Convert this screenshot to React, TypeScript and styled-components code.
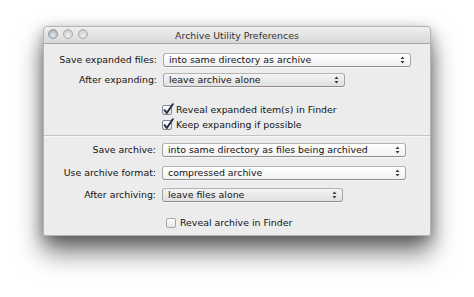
import React from "react";
import styled, { createGlobalStyle } from "styled-components";

const Global = createGlobalStyle`
  html, body { margin: 0; padding: 0; background: #ffffff; }
  body { font-family: "DejaVu Sans", "Liberation Sans", sans-serif; }
`;

const Stage = styled.div`
  width: 474px;
  height: 297px;
  padding: 26px 0 0 43px;
  box-sizing: border-box;
  overflow: hidden;
`;

const Window = styled.div`
  width: 388px;
  height: 210px;
  box-sizing: border-box;
  display: flex;
  flex-direction: column;
  background: #ececec;
  border: 1px solid #b3b3b3;
  border-radius: 4px 4px 2px 2px;
  box-shadow: 0 16px 26px rgba(0, 0, 0, 0.55), 0 4px 14px rgba(0, 0, 0, 0.3);
  color: #141414;
  font-size: 9.4px;
`;

const TitleBar = styled.div`
  position: relative;
  height: 16px;
  flex: none;
  display: flex;
  align-items: center;
  justify-content: center;
  background: linear-gradient(#f0f0f0, #d8d8d8);
  border-bottom: 1px solid #a8a8a8;
  border-radius: 4px 4px 0 0;
`;

const Lights = styled.div`
  position: absolute;
  left: 4px;
  top: 2px;
  display: flex;
  gap: 5px;
`;

const Light = styled.span<{ $first?: boolean }>`
  width: 10px;
  height: 10px;
  box-sizing: border-box;
  border-radius: 50%;
  border: 1px solid ${(p) => (p.$first ? "#8f98a3" : "#a9adb3")};
  background: ${(p) =>
    p.$first
      ? "radial-gradient(circle at 50% 70%, #e6e9ee 0%, #b8bfc8 60%, #a3abb6 100%)"
      : "radial-gradient(circle at 50% 70%, #f1f1f1 0%, #d2d4d8 60%, #bfc2c7 100%)"};
`;

const Title = styled.span`
  color: #333333;
  font-size: 9.4px;
`;

const Section = styled.div<{ $pt: number; $pb: number }>`
  padding: ${(p) => p.$pt}px 0 ${(p) => p.$pb}px 0;
  display: flex;
  flex-direction: column;
`;

const FormGrid = styled.div<{ $label: number; $gap: number }>`
  display: grid;
  grid-template-columns: ${(p) => p.$label}px auto;
  column-gap: 6px;
  row-gap: ${(p) => p.$gap}px;
  align-items: center;
`;

const Label = styled.span`
  text-align: right;
  white-space: nowrap;
  line-height: 14px;
`;

const Popup = styled.div<{ $w: number; $grey?: boolean }>`
  width: ${(p) => p.$w}px;
  height: 14px;
  box-sizing: border-box;
  display: flex;
  align-items: center;
  justify-content: space-between;
  padding: 0 5px 0 5px;
  border: 1px solid #a4a4a4;
  border-top-color: #b4b4b4;
  border-bottom-color: #8e8e8e;
  border-radius: 3px;
  background: ${(p) =>
    p.$grey
      ? "linear-gradient(#f4f4f4, #e0e0e0)"
      : "linear-gradient(#ffffff, #f1f1f1)"};
  box-shadow: 0 1px 0 rgba(255, 255, 255, 0.6);
  white-space: nowrap;
  line-height: 12px;
`;

const Arrows = () => (
  <svg width="5" height="8" viewBox="0 0 5 8">
    <path d="M0.5 3 L2.5 0.6 L4.5 3 Z" fill="#3a3a3a" />
    <path d="M0.5 5 L2.5 7.4 L4.5 5 Z" fill="#3a3a3a" />
  </svg>
);

const CheckList = styled.div<{ $indent: number; $mt: number }>`
  display: flex;
  flex-direction: column;
  padding-left: ${(p) => p.$indent}px;
  margin-top: ${(p) => p.$mt}px;
`;

const CheckRow = styled.label`
  display: flex;
  align-items: center;
  gap: 4px;
  height: 15px;
  white-space: nowrap;
`;

const Box = styled.span<{ $on?: boolean }>`
  position: relative;
  width: 10px;
  height: 10px;
  box-sizing: border-box;
  border: 1px solid ${(p) => (p.$on ? "#7d8590" : "#a6a6a6")};
  border-radius: 2px;
  background: linear-gradient(#ffffff, #e6e6e6);
  flex: none;
`;

const Tick = styled.svg`
  position: absolute;
  left: 0px;
  top: -3px;
`;

const Separator = styled.div`
  height: 1px;
  background: #c4c4c4;
  border-bottom: 1px solid #f7f7f7;
`;

const Check = ({ on, children }: { on?: boolean; children: React.ReactNode }) => (
  <CheckRow>
    <Box $on={on}>
      {on && (
        <Tick width="11" height="12" viewBox="0 0 11 12">
          <path
            d="M1.6 7.2 L3.8 10 L9.8 1.2"
            stroke="#243246"
            strokeWidth="2"
            fill="none"
            strokeLinecap="round"
            strokeLinejoin="round"
          />
        </Tick>
      )}
    </Box>
    <span>{children}</span>
  </CheckRow>
);

export default function App() {
  return (
    <>
      <Global />
      <Stage>
        <Window>
          <TitleBar>
            <Lights>
              <Light $first />
              <Light />
              <Light />
            </Lights>
            <Title>Archive Utility Preferences</Title>
          </TitleBar>
          <Section $pt={9} $pb={3}>
            <FormGrid $label={113} $gap={6}>
              <Label>Save expanded files:</Label>
              <Popup $w={248}>
                <span>into same directory as archive</span>
                <Arrows />
              </Popup>
              <Label>After expanding:</Label>
              <Popup $w={182} $grey>
                <span>leave archive alone</span>
                <Arrows />
              </Popup>
            </FormGrid>
            <CheckList $indent={118} $mt={15}>
              <Check on>Reveal expanded item(s) in Finder</Check>
              <Check on>Keep expanding if possible</Check>
            </CheckList>
          </Section>
          <Separator />
          <Section $pt={6} $pb={0}>
            <FormGrid $label={112} $gap={8.5}>
              <Label>Save archive:</Label>
              <Popup $w={244}>
                <span>into same directory as files being archived</span>
                <Arrows />
              </Popup>
              <Label>Use archive format:</Label>
              <Popup $w={244}>
                <span>compressed archive</span>
                <Arrows />
              </Popup>
              <Label>After archiving:</Label>
              <Popup $w={181} $grey>
                <span>leave files alone</span>
                <Arrows />
              </Popup>
            </FormGrid>
            <CheckList $indent={122} $mt={13}>
              <Check>Reveal archive in Finder</Check>
            </CheckList>
          </Section>
        </Window>
      </Stage>
    </>
  );
}
